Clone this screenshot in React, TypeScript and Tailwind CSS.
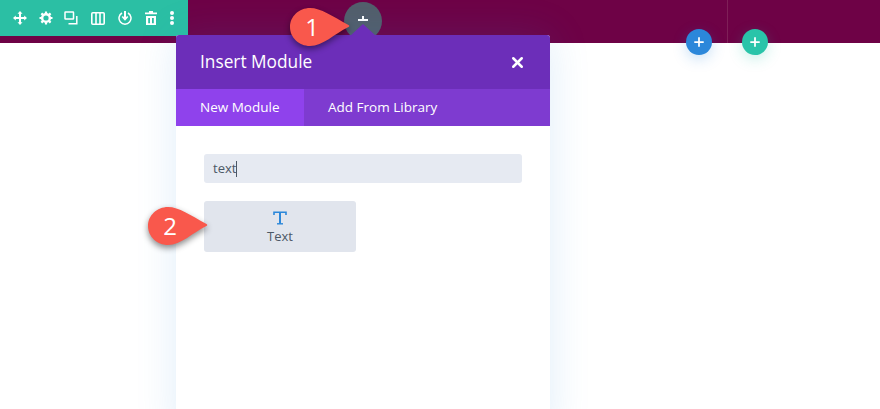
import { Plus, X } from "lucide-react";

function Callout({ n, className }: { n: number; className: string }) {
  return (
    <div className={`absolute h-[38px] w-[60px] ${className}`}>
      <svg width="60" height="38" viewBox="0 0 60 38" className="absolute inset-0 overflow-visible drop-shadow-[0_3px_3px_rgba(0,0,0,0.45)]">
        <path d="M20 0 C31 0 42 8 58.500 17 C59.500 17.700 59.500 18.500 58.500 19 C44 26 33 38 20 38 C9 38 0 29.500 0 19 C0 8.500 9 0 20 0 Z" fill="#f9584c" />
      </svg>
      <span className="relative flex h-[38px] w-[44px] items-center justify-center text-[24px] font-medium text-white">
        {n}
      </span>
    </div>
  );
}

function ToolbarIcons() {
  return (
    <div className="flex h-[36px] w-[188px] items-center gap-[10.500px] bg-[#2bbfa4] pl-[13px]">
      {/* move */}
      <svg width="14" height="14" viewBox="0 0 14 14" fill="white">
        <path d="M7 0 L9.500 2.800 H8 V6 H11.200 V4.500 L14 7 L11.200 9.500 V8 H8 V11.200 H9.500 L7 14 L4.500 11.200 H6 V8 H2.800 V9.500 L0 7 L2.800 4.500 V6 H6 V2.800 H4.500 Z" />
      </svg>
      {/* settings */}
      <svg width="14" height="14" viewBox="0 0 14 14" className="ml-[1px]">
        <circle cx="7" cy="7" r="3.900" fill="none" stroke="white" strokeWidth="2.400" />
        <path d="M7 7 V0.500 M7 7 V13.500 M7 7 H0.500 M7 7 H13.500 M7 7 L2.400 2.400 M7 7 L11.600 2.400 M7 7 L2.400 11.600 M7 7 L11.600 11.600" stroke="white" strokeWidth="2.200" />
        <circle cx="7" cy="7" r="2.600" fill="#2bbfa4" />
      </svg>
      {/* duplicate */}
      <svg width="14" height="14" viewBox="0 0 14 14" fill="none" stroke="white" strokeWidth="1.500" className="ml-[1px]">
        <rect x="1" y="1" width="8.500" height="7" rx="0.500" />
        <path d="M12.800 5 V12.800 H4.500" />
      </svg>
      {/* columns */}
      <svg width="14" height="13" viewBox="0 0 14 13" fill="none" stroke="white" strokeWidth="1.600" className="ml-[2px]">
        <rect x="0.800" y="0.800" width="12.400" height="11.400" rx="1" />
        <path d="M5 1 V12 M9 1 V12" />
      </svg>
      {/* portability */}
      <svg width="14" height="14" viewBox="0 0 14 14" fill="none" stroke="white" strokeWidth="1.500" className="ml-[3px]">
        <path d="M4 2 A6 6 0 1 0 10 2" />
        <path d="M7 0 V7.500" strokeWidth="2" />
        <path d="M4.300 5.500 L7 8.500 L9.700 5.500" strokeWidth="1.700" />
      </svg>
      {/* delete */}
      <svg width="12" height="14" viewBox="0 0 12 14" fill="white" className="ml-[2px]">
        <path d="M4 0 H8 V1.500 H12 V3.200 H0 V1.500 H4 Z" />
        <path d="M1 5 H11 V14 H1 Z M3.200 7 V12.200 H5 V7 Z M7 7 V12.200 H8.800 V7 Z" fillRule="evenodd" />
      </svg>
      {/* more */}
      <svg width="4" height="14" viewBox="0 0 4 14" fill="white" className="ml-[3px]">
        <circle cx="2" cy="2" r="2" />
        <circle cx="2" cy="7" r="2" />
        <circle cx="2" cy="12" r="2" />
      </svg>
    </div>
  );
}

export default function App() {
  return (
    <div className="relative h-[409px] w-[880px] overflow-hidden bg-white font-['Open_Sans',sans-serif]">
      {/* row band */}
      <div className="h-[43px] bg-[#6e0246]">
        <ToolbarIcons />
      </div>

      {/* column divider */}
      <div className="absolute left-[727px] top-0 h-[43px] w-px bg-[#7f2058]" />

      {/* add buttons */}
      <div className="absolute left-[686px] top-[29px] flex gap-[30px] text-white">
        <button className="flex h-[26px] w-[26px] items-center justify-center rounded-full bg-[#2b87da] shadow-[0_4px_14px_rgba(43,135,218,0.25)]">
          <Plus size={14} strokeWidth={3} />
        </button>
        <button className="flex h-[26px] w-[26px] items-center justify-center rounded-full bg-[#29c4a9] shadow-[0_4px_14px_rgba(41,196,169,0.25)]">
          <Plus size={14} strokeWidth={3} />
        </button>
      </div>

      {/* dark add button behind modal */}
      <button className="absolute left-[344px] top-[2px] flex h-[38px] w-[38px] items-start justify-center rounded-full bg-[#535e6b] pt-[14px] text-white">
        <svg width="10" height="6" viewBox="0 0 10 6" fill="white">
          <path d="M4 0 H6 V3 H10 V5 H0 V3 H4 Z" />
        </svg>
      </button>

      {/* modal */}
      <div className="absolute left-[176px] top-[35px] h-[400px] w-[374px] rounded-t-[3px] bg-white shadow-[0_0_40px_rgba(43,135,218,0.15)]">
        {/* arrow */}
        <div className="absolute left-[174px] top-[-11px] h-0 w-0 border-x-[13px] border-b-[12px] border-x-transparent border-b-[#6c2eb9]" />
        <div className="flex h-[54px] items-center justify-between rounded-t-[3px] bg-[#6c2eb9] px-6">
          <span className="text-[17.300px] font-medium text-white">Insert Module</span>
          <X size={17} strokeWidth={3.500} className="text-white" />
        </div>
        <div className="flex h-[37px] bg-[#7e3bd0] text-[13.500px] font-medium text-white">
          <div className="flex w-[128px] items-center bg-[#8f42ec] pl-6">New Module</div>
          <div className="flex items-center pl-6">Add From Library</div>
        </div>
        <div className="px-7 pt-7">
          <div className="flex h-[29px] items-center rounded-[3px] bg-[#e6eaf2] px-[9px] text-[13px] text-[#4c5866]">
            text<span className="h-[16px] w-px bg-[#4c5866]" />
          </div>
          <div className="mt-[18px] flex h-[51px] w-[152px] flex-col items-center justify-center rounded-[3px] bg-[#e1e5ed] pt-[2px]">
            <svg width="14" height="14" viewBox="0 0 14 14" fill="none" stroke="#2b87da">
              <path d="M1 4 V1.200 H13 V4" strokeWidth="1.600" />
              <path d="M7 1.500 V12.800" strokeWidth="2" />
              <path d="M4 12.800 H10" strokeWidth="1.400" />
            </svg>
            <span className="mt-[2px] text-[13px] font-medium leading-[18px] text-[#4c5866]">Text</span>
          </div>
        </div>
      </div>

      <Callout n={1} className="left-[290px] top-[8px]" />
      <Callout n={2} className="left-[148px] top-[207px]" />
    </div>
  );
}
